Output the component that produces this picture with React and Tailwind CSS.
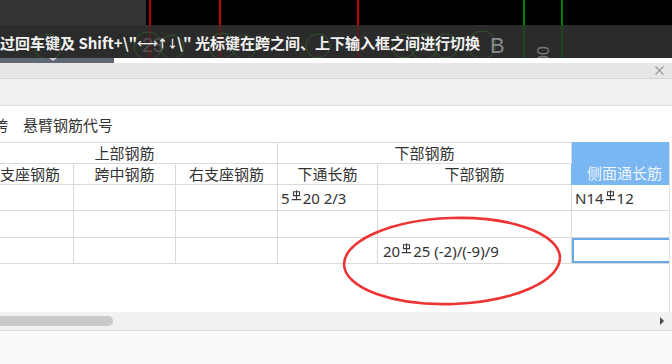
import React from "react";

const Rebar = () => (
  <svg width="11" height="11" viewBox="0 0 11 11" className="inline-block relative -top-[4px] mx-[1px]">
    <path d="M2.5 1.8h6v3.8h-6z M5.5 0.3v9.2 M0.8 9.6h9.4" fill="none" stroke="#3a3a3a" strokeWidth="1.1" />
  </svg>
);

const border = "border border-[#d9d9d9]";
const data = "font-['Noto_Sans','Open_Sans',sans-serif] text-[15px]";

export default function App() {
  return (
    <div className="relative w-[672px] h-[364px] overflow-hidden bg-white font-['Noto_Sans_CJK_SC','Noto_Sans',sans-serif] text-[#333]">
      {/* top canvas area */}
      <div className="relative h-[58px] overflow-hidden">
        <div className="flex h-[25px]">
          <div className="w-[146px] bg-[#343434]" />
          <div className="flex-1 bg-black" />
        </div>
        <div className="h-[33px] bg-[#2b2b2b]" />
        <svg className="absolute inset-0" width="672" height="58" viewBox="0 0 672 58">
          <g strokeWidth="2">
            <line x1="150" y1="0" x2="150" y2="25" stroke="#b40000" />
            <line x1="220" y1="0" x2="220" y2="25" stroke="#c80000" />
            <line x1="358" y1="0" x2="358" y2="25" stroke="#c00000" />
            <line x1="524" y1="0" x2="524" y2="25" stroke="#008000" />
            <line x1="562" y1="0" x2="562" y2="25" stroke="#008000" />
          </g>
          <g strokeWidth="1.5" opacity="0.45">
            <line x1="150" y1="25" x2="150" y2="58" stroke="#b40000" />
            <line x1="220" y1="25" x2="220" y2="58" stroke="#c80000" />
            <line x1="358" y1="25" x2="358" y2="58" stroke="#c00000" />
            <line x1="524" y1="25" x2="524" y2="58" stroke="#008000" />
            <line x1="562" y1="25" x2="562" y2="58" stroke="#008000" />
          </g>
          <g fill="none" stroke="#2f5f2f" strokeWidth="1" opacity="0.8">
            <circle cx="48" cy="47" r="13" />
            <circle cx="148" cy="46" r="14" />
            <circle cx="172" cy="47" r="12" />
            <circle cx="222" cy="46" r="13" />
            <circle cx="244" cy="47" r="12" />
            <circle cx="318" cy="46" r="12" />
            <circle cx="404" cy="46" r="12" />
            <circle cx="424" cy="47" r="13" />
            <circle cx="446" cy="46" r="12" />
            <circle cx="482" cy="45" r="14" />
          </g>
          <text x="142" y="52" fontSize="20" fill="#505050" fontFamily="Liberation Sans, sans-serif">23</text>
          <text x="490" y="53" fontSize="22" fill="#8a8a8a" fontFamily="Liberation Sans, sans-serif">B</text>
          <text x="0" y="0" fontSize="16" fill="#7a7a7a" fontFamily="Liberation Sans, sans-serif" transform="translate(549 64) rotate(-90)">00</text>
        </svg>
        <div className="absolute left-0 top-[25px] h-[33px] flex items-center pt-[3px] text-[15px] font-semibold text-[#f2f2f2] whitespace-nowrap">
          过回车键及 Shift+\"<span className="text-[11px] tracking-[-1px]">←→↑↓</span>\" 光标键在跨之间、上下输入框之间进行切换
        </div>
      </div>

      {/* strip */}
      <div className="flex h-[5px]">
        <div className="relative w-[114px] bg-[#606873]">
          <div className="absolute left-[49px] top-0 w-0 h-0 border-l-[4px] border-r-[4px] border-t-[3px] border-l-transparent border-r-transparent border-t-[#c8ccd2]" />
        </div>
        <div className="flex-1 bg-white" />
      </div>

      {/* title bar */}
      <div className="h-[16px] bg-[#e6e6e6] border-b border-[#d6d6d6] flex items-center justify-end pr-[8px]">
        <svg width="9" height="9" viewBox="0 0 9 9">
          <path d="M0.5 0.5l8 8M8.5 0.5l-8 8" stroke="#9a9a9a" strokeWidth="1.1" />
        </svg>
      </div>

      {/* toolbar */}
      <div className="h-[27px] bg-[#f0f0f0] border-b border-[#dcdcdc]" />

      {/* label row */}
      <div className="h-[36px] flex items-center pt-[2px] text-[15px] text-[#333] whitespace-nowrap">
        <span className="ml-[-7px]">跨</span>
        <span className="ml-[15px]">悬臂钢筋代号</span>
      </div>

      {/* table */}
      <div className="relative w-[670px] h-[170px] overflow-hidden border-r border-[#e0e0e0]">
        <table className="ml-[-29px] w-[706px] min-w-[706px] border-collapse table-fixed text-[15px] leading-[20px]">
          <colgroup>
            <col className="w-[102px]" />
            <col className="w-[102px]" />
            <col className="w-[102px]" />
            <col className="w-[100px]" />
            <col className="w-[194px]" />
            <col className="w-[106px]" />
          </colgroup>
          <tbody>
            <tr className="h-[21px]">
              <th colSpan={3} className={`${border} font-normal text-center p-0`}>上部钢筋</th>
              <th colSpan={2} className={`${border} font-normal text-center p-0`}>下部钢筋</th>
              <th rowSpan={2} className="border border-[#7ab6f2] bg-[#7ab6f2] font-normal text-[#eef5ff] text-center align-bottom p-0 pb-[1px] whitespace-nowrap">侧面通长筋</th>
            </tr>
            <tr className="h-[21px]">
              <th className={`${border} font-normal text-center p-0 whitespace-nowrap`}>左支座钢筋</th>
              <th className={`${border} font-normal text-center p-0`}>跨中钢筋</th>
              <th className={`${border} font-normal text-center p-0 whitespace-nowrap`}>右支座钢筋</th>
              <th className={`${border} font-normal text-center p-0`}>下通长筋</th>
              <th className={`${border} font-normal text-center p-0`}>下部钢筋</th>
            </tr>
            <tr className="h-[26px]">
              <td className={`${border} p-0`} />
              <td className={`${border} p-0`} />
              <td className={`${border} p-0`} />
              <td className={`${border} ${data} px-[3px] py-0 whitespace-nowrap`}>5<Rebar />20 2/3</td>
              <td className={`${border} p-0`} />
              <td className={`${border} ${data} px-[3px] py-0 whitespace-nowrap`}>N14<Rebar />12</td>
            </tr>
            <tr className="h-[27px]">
              <td className={`${border} p-0`} />
              <td className={`${border} p-0`} />
              <td className={`${border} p-0`} />
              <td className={`${border} p-0`} />
              <td className={`${border} p-0`} />
              <td className={`${border} p-0`} />
            </tr>
            <tr className="h-[25px]">
              <td className={`${border} p-0`} />
              <td className={`${border} p-0`} />
              <td className={`${border} p-0`} />
              <td className={`${border} p-0`} />
              <td className={`${border} ${data} px-[5px] py-0 whitespace-nowrap`}>20<Rebar />25 (-2)/(-9)/9</td>
              <td className={`${border} p-0`}>
                <div className="h-[25px] border-2 border-[#6aa8e8]" />
              </td>
            </tr>
          </tbody>
        </table>
      </div>

      {/* scrollbar */}
      <div className="relative h-[19px] bg-[#f1f1f1] border-b border-[#dcdcdc] flex items-center">
        <div className="w-[113px] h-[10px] bg-[#c9c9c9] rounded-r-full" />
        <div className="absolute right-[8px] top-[5px] w-0 h-0 border-t-[4px] border-b-[4px] border-l-[4px] border-t-transparent border-b-transparent border-l-[#4a4a4a]" />
      </div>
      <div className="h-[34px] bg-[#fafafa]" />

      {/* red annotation ellipse */}
      <svg className="absolute left-0 top-0 pointer-events-none" width="672" height="364" viewBox="0 0 672 364">
        <ellipse cx="452" cy="261" rx="108" ry="43" fill="none" stroke="#ec3434" strokeWidth="2.6" transform="rotate(-2 452 261)" />
      </svg>
    </div>
  );
}
